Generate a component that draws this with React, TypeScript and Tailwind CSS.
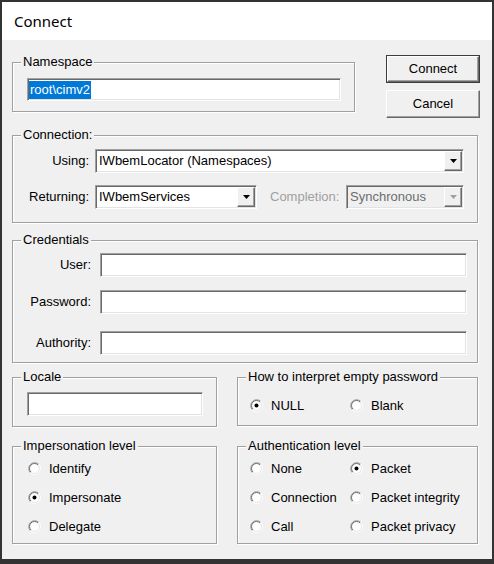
import type { ReactNode } from 'react'

const sunken =
  'border border-t-[#a0a0a0] border-l-[#a0a0a0] border-r-white border-b-white shadow-[inset_1px_1px_0_#696969,inset_-1px_-1px_0_#e3e3e3]'
const raised =
  'border border-t-white border-l-white border-r-[#696969] border-b-[#696969] shadow-[inset_-1px_-1px_0_#a0a0a0]'

function Group({ title, className, children }: { title: string; className: string; children?: ReactNode }) {
  return (
    <div className={`relative shrink-0 border border-[#a0a0a0] shadow-[inset_1px_1px_0_#fff,1px_1px_0_#fff] ${className}`}>
      <span className="absolute -top-[9px] left-[8px] bg-[#f0f0f0] px-[2px] leading-[15px]">{title}</span>
      {children}
    </div>
  )
}

function TextBox({ className }: { className: string }) {
  return <div className={`${sunken} h-[24px] bg-white ${className}`} />
}

function Combo({ value, className, disabled }: { value: string; className: string; disabled?: boolean }) {
  return (
    <div className={`${sunken} flex h-[24px] shrink-0 ${disabled ? 'bg-[#f0f0f0] text-[#6d6d6d]' : 'bg-white'} ${className}`}>
      <span className="flex flex-1 items-center pl-[3px]">{value}</span>
      <span className={`${raised} m-[1px] flex w-[18px] items-center justify-center bg-[#f0f0f0]`}>
        <svg width="7" height="4" viewBox="0 0 7 4">
          <path d="M0 0h7L3.5 4z" fill={disabled ? '#a0a0a0' : '#000'} />
        </svg>
      </span>
    </div>
  )
}

function Radio({ label, checked }: { label: string; checked?: boolean }) {
  return (
    <div className="flex h-[15px] items-center gap-[8px]">
      <svg width="13" height="13" viewBox="0 0 13 13" className="shrink-0">
        <circle cx="6.5" cy="6.5" r="6" fill="#fff" />
        <path d="M2.26 10.74A6 6 0 0 1 10.74 2.26" stroke="#a0a0a0" fill="none" />
        <path d="M10.74 2.26A6 6 0 0 1 2.26 10.74" stroke="#fff" fill="none" />
        <path d="M2.96 10.04A5 5 0 0 1 10.04 2.96" stroke="#696969" fill="none" />
        <path d="M10.04 2.96A5 5 0 0 1 2.96 10.04" stroke="#e3e3e3" fill="none" />
        {checked && <circle cx="6.5" cy="6.5" r="2" fill="#000" />}
      </svg>
      <span>{label}</span>
    </div>
  )
}

function Button({ label, isDefault }: { label: string; isDefault?: boolean }) {
  const inner = (
    <div className={`${raised} flex h-full w-full items-center justify-center bg-[#f0f0f0]`}>{label}</div>
  )
  if (isDefault) {
    return <div className="h-[28px] w-[94px] border border-[#3c3c3c]">{inner}</div>
  }
  return <div className="h-[28px] w-[94px]">{inner}</div>
}

export default function App() {
  return (
    <div className="flex h-[564px] w-[494px] flex-col border-2 border-b-[5px] border-[#333] font-['Liberation_Sans',Arial,sans-serif] text-[13px] text-black">
      {/* Title bar */}
      <div className="flex h-[38px] shrink-0 items-center bg-white pl-[12px] font-['Noto_Sans',sans-serif] text-[15px]">
        Connect
      </div>

      <div className="flex flex-1 flex-col bg-[#f0f0f0] pl-[10px] pr-[12px]">
        {/* Namespace + buttons */}
        <div className="flex h-[78px] items-start">
          <Group title="Namespace" className="mt-[22px] h-[50px] w-[343px] pl-[14px] pt-[15px]">
            <div className={`${sunken} flex h-[23px] w-[314px] items-center bg-white pl-[1px]`}>
              <span className="bg-[#0078d7] px-px leading-[18px] text-white">root\cimv2</span>
            </div>
          </Group>
          <div className="ml-[31px] mt-[15px] flex flex-col gap-[7px]">
            <Button label="Connect" isDefault />
            <Button label="Cancel" />
          </div>
        </div>

        {/* Connection */}
        <Group title="Connection:" className="mt-[17px] h-[88px] w-[466px] pr-[13px] pt-[13px]">
          <div className="flex items-center">
            <span className="w-[76px] text-right">Using:</span>
            <Combo value="IWbemLocator (Namespaces)" className="ml-[6px] w-[369px]" />
          </div>
          <div className="mt-[12px] flex items-center">
            <span className="w-[76px] text-right">Returning:</span>
            <Combo value="IWbemServices" className="ml-[6px] w-[162px]" />
            <span className="ml-[13px] text-[#a0a0a0]">Completion:</span>
            <Combo value="Synchronous" className="ml-auto w-[118px]" disabled />
          </div>
        </Group>

        {/* Credentials */}
        <Group title="Credentials" className="mt-[17px] h-[123px] w-[466px] pt-[12px]">
          <div className="flex items-center">
            <span className="w-[78px] text-right">User:</span>
            <TextBox className="ml-[9px] w-[367px]" />
          </div>
          <div className="mt-[13px] flex items-center">
            <span className="w-[78px] text-right">Password:</span>
            <TextBox className="ml-[9px] w-[367px]" />
          </div>
          <div className="mt-[17px] flex items-center">
            <span className="w-[78px] text-right">Authority:</span>
            <TextBox className="ml-[9px] w-[367px]" />
          </div>
        </Group>

        {/* Locale + empty password */}
        <div className="mt-[14px] flex items-start gap-[20px]">
          <Group title="Locale" className="h-[50px] w-[205px] pl-[14px] pt-[14px]">
            <TextBox className="w-[176px]" />
          </Group>
          <Group title="How to interpret empty password" className="h-[49px] w-[241px] pl-[12px] pt-[20px]">
            <div className="flex">
              <div className="w-[100px]">
                <Radio label="NULL" checked />
              </div>
              <Radio label="Blank" />
            </div>
          </Group>
        </div>

        {/* Impersonation + authentication */}
        <div className="mt-[19px] flex items-start gap-[20px]">
          <Group title="Impersonation level" className="h-[98px] w-[205px] pl-[15px] pt-[14px]">
            <div className="flex flex-col gap-[14px]">
              <Radio label="Identify" />
              <Radio label="Impersonate" checked />
              <Radio label="Delegate" />
            </div>
          </Group>
          <Group title="Authentication level" className="h-[98px] w-[241px] pl-[12px] pt-[14px]">
            <div className="grid grid-cols-[100px_auto] gap-y-[14px]">
              <Radio label="None" />
              <Radio label="Packet" checked />
              <Radio label="Connection" />
              <Radio label="Packet integrity" />
              <Radio label="Call" />
              <Radio label="Packet privacy" />
            </div>
          </Group>
        </div>
      </div>
    </div>
  )
}
